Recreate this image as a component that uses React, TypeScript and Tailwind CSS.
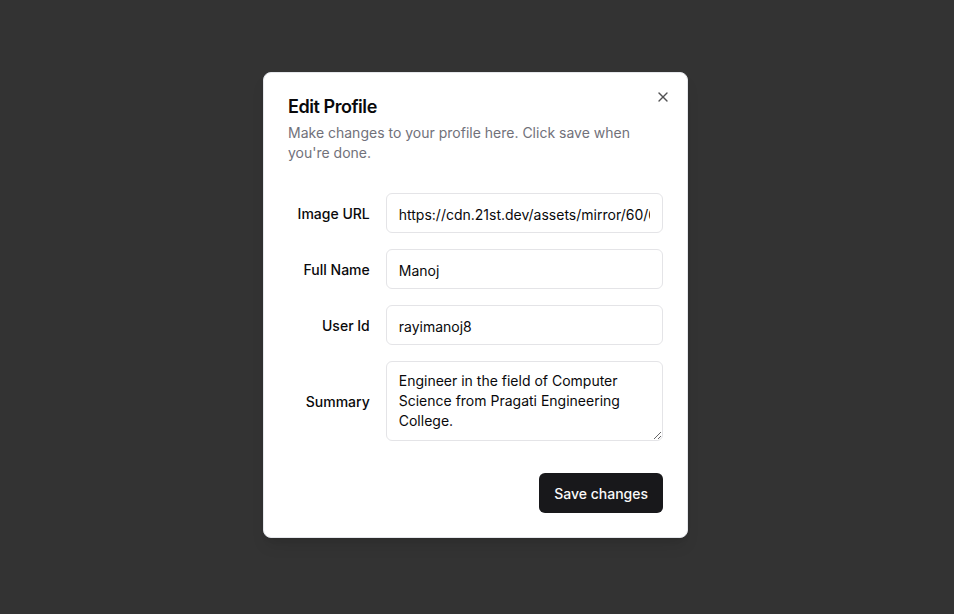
import { X } from "lucide-react";

const fields = [
  { label: "Image URL", value: "https://cdn.21st.dev/assets/mirror/60/60a1b2c3.png" },
  { label: "Full Name", value: "Manoj" },
  { label: "User Id", value: "rayimanoj8" },
];

export default function App() {
  return (
    <div
      className="min-h-screen w-full bg-[#333333] flex items-start justify-center pt-[72px] pr-[3px]"
      style={{ fontFamily: "Inter, 'Noto Sans', sans-serif" }}
    >
      <div className="relative w-[425px] bg-white rounded-lg border border-gray-200 shadow-lg p-6 flex flex-col gap-4">
        <div className="flex flex-col gap-[7px] pt-px -mb-[2px]">
          <h2 className="text-lg font-semibold leading-none tracking-tight text-[#09090b]">
            Edit Profile
          </h2>
          <p className="text-sm text-[#71717a] leading-5">
            Make changes to your profile here. Click save when you're done.
          </p>
        </div>

        <div className="grid gap-4 py-4">
          {fields.map((f) => (
            <div key={f.label} className="grid grid-cols-4 items-center gap-4">
              <label className="text-right text-sm font-medium leading-none text-[#09090b] pt-0.5">
                {f.label}
              </label>
              <input
                defaultValue={f.value}
                className="col-span-3 h-10 w-full rounded-md border border-[#e4e4e7] bg-white px-3 pt-[9px] pb-[7px] text-sm text-[#09090b] outline-none"
              />
            </div>
          ))}
          <div className="grid grid-cols-4 items-center gap-4">
            <label className="text-right text-sm font-medium leading-none text-[#09090b] pt-0.5">
              Summary
            </label>
            <textarea
              defaultValue="Engineer in the field of Computer Science from Pragati Engineering College."
              className="col-span-3 min-h-[80px] h-20 w-full rounded-md border border-[#e4e4e7] bg-white px-3 pt-[9px] pb-[7px] text-sm text-[#09090b] outline-none"
            />
          </div>
        </div>

        <div className="flex justify-end">
          <button className="h-10 rounded-md bg-[#18181b] px-[15px] pt-0.5 text-sm font-medium text-[#fafafa]">
            Save changes
          </button>
        </div>

        <button className="absolute right-4 top-4 rounded-sm opacity-70 text-[#09090b]">
          <X size={16} />
        </button>
      </div>
    </div>
  );
}
